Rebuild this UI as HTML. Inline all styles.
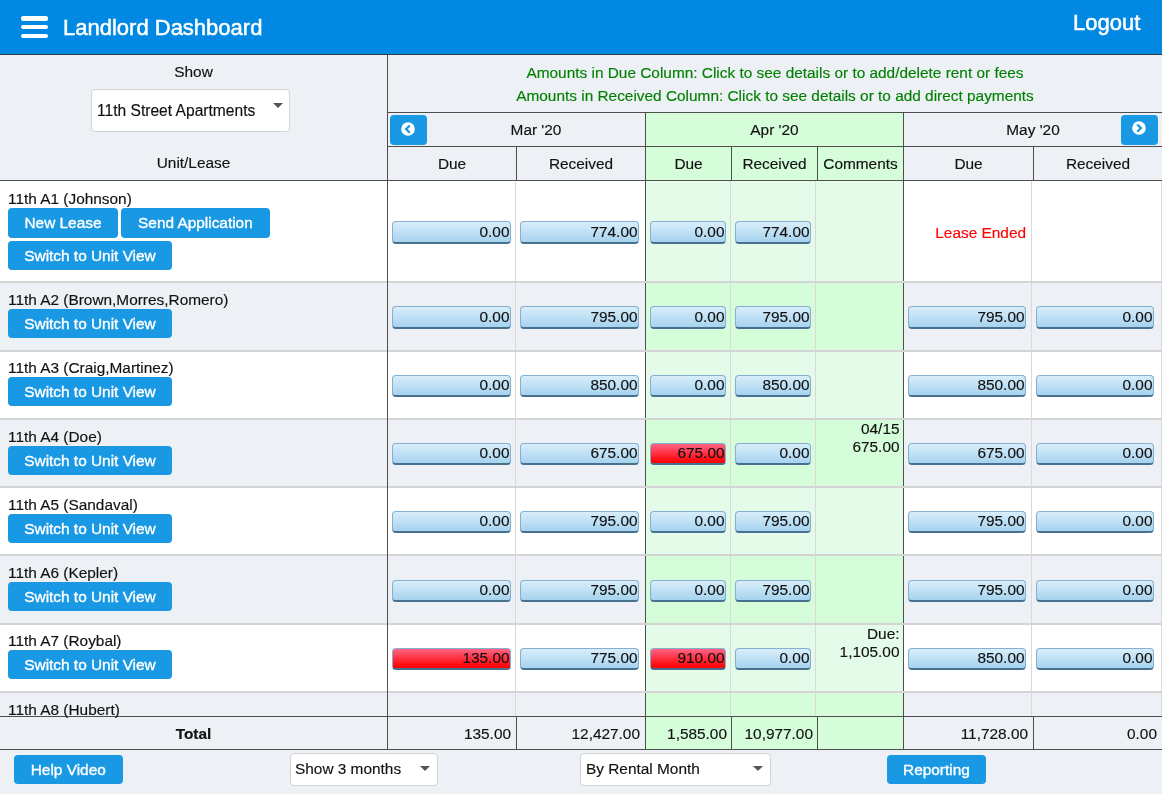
<!DOCTYPE html>
<html><head><meta charset="utf-8"><title>Landlord Dashboard</title>
<style>
html,body{margin:0;padding:0;}
body{width:1162px;height:794px;overflow:hidden;position:relative;background:#edf0f5;font-family:"Liberation Sans",sans-serif;}
body>div{position:absolute;box-sizing:border-box;}
.t,.ab,.ub{will-change:transform;-webkit-text-stroke:0.15px currentColor;}
.ub{-webkit-text-stroke:0.35px #fff;}
.t{white-space:nowrap;line-height:20px;}
.ab{height:22.5px;border-radius:4px;border:1px solid #86afcf;border-bottom:2px solid #47718f;background:linear-gradient(#d8eefb,#a6d3ee);text-align:right;font-size:15.4px;line-height:20px;color:#111;padding-right:0.5px;white-space:nowrap;}
.ab.red{background:linear-gradient(#ff6585,#ff0a10 85%,#ff0000);}
.ub{height:29.5px;border-radius:4px;background:#1998e3;color:#fff;text-align:center;font-size:15.4px;line-height:29.5px;white-space:nowrap;}
</style></head><body>
<div style="left:0px;top:0px;width:1162px;height:54px;background:#0088e2;"></div>
<div style="left:0px;top:54px;width:1162px;height:1px;background:#2f3a44;"></div>
<div style="left:646px;top:113px;width:257px;height:67px;background:#d5fdda;"></div>
<div style="left:0px;top:181px;width:1162px;height:100px;background:#ffffff;"></div>
<div style="left:646px;top:181px;width:257px;height:100px;background:#e5fbe9;"></div>
<div style="left:0px;top:283px;width:1162px;height:67px;background:#edf0f5;"></div>
<div style="left:646px;top:283px;width:257px;height:67px;background:#d5fdda;"></div>
<div style="left:0px;top:352px;width:1162px;height:66px;background:#ffffff;"></div>
<div style="left:646px;top:352px;width:257px;height:66px;background:#e5fbe9;"></div>
<div style="left:0px;top:420px;width:1162px;height:66px;background:#edf0f5;"></div>
<div style="left:646px;top:420px;width:257px;height:66px;background:#d5fdda;"></div>
<div style="left:0px;top:488px;width:1162px;height:66px;background:#ffffff;"></div>
<div style="left:646px;top:488px;width:257px;height:66px;background:#e5fbe9;"></div>
<div style="left:0px;top:556px;width:1162px;height:67px;background:#edf0f5;"></div>
<div style="left:646px;top:556px;width:257px;height:67px;background:#d5fdda;"></div>
<div style="left:0px;top:625px;width:1162px;height:66px;background:#ffffff;"></div>
<div style="left:646px;top:625px;width:257px;height:66px;background:#e5fbe9;"></div>
<div style="left:0px;top:693px;width:1162px;height:23px;background:#edf0f5;"></div>
<div style="left:646px;top:693px;width:257px;height:23px;background:#d5fdda;"></div>
<div style="left:0px;top:281px;width:1162px;height:2px;background:#d4d4d4;"></div>
<div style="left:0px;top:350px;width:1162px;height:2px;background:#d4d4d4;"></div>
<div style="left:0px;top:418px;width:1162px;height:2px;background:#d4d4d4;"></div>
<div style="left:0px;top:486px;width:1162px;height:2px;background:#d4d4d4;"></div>
<div style="left:0px;top:554px;width:1162px;height:2px;background:#d4d4d4;"></div>
<div style="left:0px;top:623px;width:1162px;height:2px;background:#d4d4d4;"></div>
<div style="left:0px;top:691px;width:1162px;height:2px;background:#d4d4d4;"></div>
<div style="left:646px;top:717px;width:257px;height:32px;background:#d5fdda;"></div>
<div style="left:387px;top:55px;width:1px;height:694px;background:#4e4e4e;"></div>
<div style="left:388px;top:112px;width:774px;height:1px;background:#4e4e4e;"></div>
<div style="left:388px;top:146px;width:774px;height:1px;background:#4e4e4e;"></div>
<div style="left:0px;top:180px;width:1162px;height:1px;background:#4e4e4e;"></div>
<div style="left:0px;top:716px;width:1162px;height:1px;background:#4e4e4e;"></div>
<div style="left:0px;top:749px;width:1162px;height:1px;background:#4e4e4e;"></div>
<div style="left:516px;top:147px;width:1px;height:33px;background:#4e4e4e;"></div>
<div style="left:731px;top:147px;width:1px;height:33px;background:#4e4e4e;"></div>
<div style="left:817px;top:147px;width:1px;height:33px;background:#4e4e4e;"></div>
<div style="left:1033px;top:147px;width:1px;height:33px;background:#4e4e4e;"></div>
<div style="left:645px;top:113px;width:1px;height:67px;background:#4e4e4e;"></div>
<div style="left:903px;top:113px;width:1px;height:67px;background:#4e4e4e;"></div>
<div style="left:645px;top:181px;width:1px;height:100px;background:#4e4e4e;"></div>
<div style="left:645px;top:283px;width:1px;height:67px;background:#4e4e4e;"></div>
<div style="left:645px;top:352px;width:1px;height:66px;background:#4e4e4e;"></div>
<div style="left:645px;top:420px;width:1px;height:66px;background:#4e4e4e;"></div>
<div style="left:645px;top:488px;width:1px;height:66px;background:#4e4e4e;"></div>
<div style="left:645px;top:556px;width:1px;height:67px;background:#4e4e4e;"></div>
<div style="left:645px;top:625px;width:1px;height:66px;background:#4e4e4e;"></div>
<div style="left:645px;top:693px;width:1px;height:23px;background:#4e4e4e;"></div>
<div style="left:903px;top:181px;width:1px;height:100px;background:#4e4e4e;"></div>
<div style="left:903px;top:283px;width:1px;height:67px;background:#4e4e4e;"></div>
<div style="left:903px;top:352px;width:1px;height:66px;background:#4e4e4e;"></div>
<div style="left:903px;top:420px;width:1px;height:66px;background:#4e4e4e;"></div>
<div style="left:903px;top:488px;width:1px;height:66px;background:#4e4e4e;"></div>
<div style="left:903px;top:556px;width:1px;height:67px;background:#4e4e4e;"></div>
<div style="left:903px;top:625px;width:1px;height:66px;background:#4e4e4e;"></div>
<div style="left:903px;top:693px;width:1px;height:23px;background:#4e4e4e;"></div>
<div style="left:515px;top:181px;width:1px;height:100px;background:#d9d9d9;"></div>
<div style="left:515px;top:283px;width:1px;height:67px;background:#d9d9d9;"></div>
<div style="left:515px;top:352px;width:1px;height:66px;background:#d9d9d9;"></div>
<div style="left:515px;top:420px;width:1px;height:66px;background:#d9d9d9;"></div>
<div style="left:515px;top:488px;width:1px;height:66px;background:#d9d9d9;"></div>
<div style="left:515px;top:556px;width:1px;height:67px;background:#d9d9d9;"></div>
<div style="left:515px;top:625px;width:1px;height:66px;background:#d9d9d9;"></div>
<div style="left:515px;top:693px;width:1px;height:23px;background:#d9d9d9;"></div>
<div style="left:730px;top:181px;width:1px;height:100px;background:#d9d9d9;"></div>
<div style="left:730px;top:283px;width:1px;height:67px;background:#d9d9d9;"></div>
<div style="left:730px;top:352px;width:1px;height:66px;background:#d9d9d9;"></div>
<div style="left:730px;top:420px;width:1px;height:66px;background:#d9d9d9;"></div>
<div style="left:730px;top:488px;width:1px;height:66px;background:#d9d9d9;"></div>
<div style="left:730px;top:556px;width:1px;height:67px;background:#d9d9d9;"></div>
<div style="left:730px;top:625px;width:1px;height:66px;background:#d9d9d9;"></div>
<div style="left:730px;top:693px;width:1px;height:23px;background:#d9d9d9;"></div>
<div style="left:815px;top:181px;width:1px;height:100px;background:#d9d9d9;"></div>
<div style="left:815px;top:283px;width:1px;height:67px;background:#d9d9d9;"></div>
<div style="left:815px;top:352px;width:1px;height:66px;background:#d9d9d9;"></div>
<div style="left:815px;top:420px;width:1px;height:66px;background:#d9d9d9;"></div>
<div style="left:815px;top:488px;width:1px;height:66px;background:#d9d9d9;"></div>
<div style="left:815px;top:556px;width:1px;height:67px;background:#d9d9d9;"></div>
<div style="left:815px;top:625px;width:1px;height:66px;background:#d9d9d9;"></div>
<div style="left:815px;top:693px;width:1px;height:23px;background:#d9d9d9;"></div>
<div style="left:1031px;top:181px;width:1px;height:100px;background:#d9d9d9;"></div>
<div style="left:1031px;top:283px;width:1px;height:67px;background:#d9d9d9;"></div>
<div style="left:1031px;top:352px;width:1px;height:66px;background:#d9d9d9;"></div>
<div style="left:1031px;top:420px;width:1px;height:66px;background:#d9d9d9;"></div>
<div style="left:1031px;top:488px;width:1px;height:66px;background:#d9d9d9;"></div>
<div style="left:1031px;top:556px;width:1px;height:67px;background:#d9d9d9;"></div>
<div style="left:1031px;top:625px;width:1px;height:66px;background:#d9d9d9;"></div>
<div style="left:1031px;top:693px;width:1px;height:23px;background:#d9d9d9;"></div>
<div style="left:1161px;top:181px;width:1px;height:100px;background:#d9d9d9;"></div>
<div style="left:1161px;top:283px;width:1px;height:67px;background:#d9d9d9;"></div>
<div style="left:1161px;top:352px;width:1px;height:66px;background:#d9d9d9;"></div>
<div style="left:1161px;top:420px;width:1px;height:66px;background:#d9d9d9;"></div>
<div style="left:1161px;top:488px;width:1px;height:66px;background:#d9d9d9;"></div>
<div style="left:1161px;top:556px;width:1px;height:67px;background:#d9d9d9;"></div>
<div style="left:1161px;top:625px;width:1px;height:66px;background:#d9d9d9;"></div>
<div style="left:1161px;top:693px;width:1px;height:23px;background:#d9d9d9;"></div>
<div style="left:516px;top:717px;width:1px;height:32px;background:#4e4e4e;"></div>
<div style="left:645px;top:717px;width:1px;height:32px;background:#4e4e4e;"></div>
<div style="left:731px;top:717px;width:1px;height:32px;background:#4e4e4e;"></div>
<div style="left:817px;top:717px;width:1px;height:32px;background:#4e4e4e;"></div>
<div style="left:903px;top:717px;width:1px;height:32px;background:#4e4e4e;"></div>
<div style="left:1033px;top:717px;width:1px;height:32px;background:#4e4e4e;"></div>
<div style="left:21px;top:16px;width:27px;height:4.6px;background:#fff;border-radius:2px"></div>
<div style="left:21px;top:24.9px;width:27px;height:4.6px;background:#fff;border-radius:2px"></div>
<div style="left:21px;top:33.5px;width:27px;height:4.6px;background:#fff;border-radius:2px"></div>
<div class="t" style="top:17.68px;font-size:22px;color:#fff;font-weight:normal;left:63.2px;-webkit-text-stroke:0.5px #fff;">Landlord Dashboard</div>
<div class="t" style="top:13.18px;font-size:22px;color:#fff;font-weight:normal;left:1072.6px;-webkit-text-stroke:0.5px #fff;">Logout</div>
<div class="t" style="top:61.86px;font-size:15.4px;color:#111;font-weight:normal;left:0px;width:387px;text-align:center;">Show</div>
<div style="left:91px;top:88.5px;width:199px;height:43.5px;background:#fff;border:1px solid #cfd3d8;border-radius:4px"></div>
<div class="t" style="top:100.59px;font-size:15.6px;color:#111;font-weight:normal;left:97px;">11th Street Apartments</div>
<div style="left:272.5px;top:102.5px;width:0;height:0;border-left:5px solid transparent;border-right:5px solid transparent;border-top:5px solid #555"></div>
<div class="t" style="top:153.26px;font-size:15.4px;color:#111;font-weight:normal;left:0px;width:387px;text-align:center;">Unit/Lease</div>
<div class="t" style="top:63.26px;font-size:15.4px;color:#008000;font-weight:normal;left:388px;width:774px;text-align:center;">Amounts in Due Column: Click to see details or to add/delete rent or fees</div>
<div class="t" style="top:85.56px;font-size:15.4px;color:#008000;font-weight:normal;left:388px;width:774px;text-align:center;">Amounts in Received Column: Click to see details or to add direct payments</div>
<div style="left:390px;top:115px;width:37px;height:30px;background:#1998e3;border-radius:4px"><svg width="18" height="18" style="position:absolute;left:9.05px;top:4.7px" viewBox="0 0 18 18"><circle cx="9" cy="9" r="6.8" fill="#fff"/><path d="M10.75 5.5 L7.05 9.1 L10.75 12.7" stroke="#1998e3" stroke-width="2.2" fill="none" stroke-linecap="butt" stroke-linejoin="miter"/></svg></div>
<div style="left:1121px;top:115px;width:37px;height:30px;background:#1998e3;border-radius:4px"><svg width="18" height="18" style="position:absolute;left:9.25px;top:4.3px" viewBox="0 0 18 18"><circle cx="9" cy="9" r="6.8" fill="#fff"/><path d="M7.25 5.5 L10.95 9.1 L7.25 12.7" stroke="#1998e3" stroke-width="2.2" fill="none" stroke-linecap="butt" stroke-linejoin="miter"/></svg></div>
<div class="t" style="top:119.56px;font-size:15.4px;color:#111;font-weight:normal;left:427px;width:218px;text-align:center;">Mar &#39;20</div>
<div class="t" style="top:119.56px;font-size:15.4px;color:#111;font-weight:normal;left:646px;width:257px;text-align:center;">Apr &#39;20</div>
<div class="t" style="top:119.56px;font-size:15.4px;color:#111;font-weight:normal;left:904px;width:258px;text-align:center;">May &#39;20</div>
<div class="t" style="top:153.66px;font-size:15.4px;color:#111;font-weight:normal;left:388px;width:128px;text-align:center;">Due</div>
<div class="t" style="top:153.66px;font-size:15.4px;color:#111;font-weight:normal;left:517px;width:128px;text-align:center;">Received</div>
<div class="t" style="top:153.66px;font-size:15.4px;color:#111;font-weight:normal;left:646px;width:85px;text-align:center;">Due</div>
<div class="t" style="top:153.66px;font-size:15.4px;color:#111;font-weight:normal;left:732px;width:85px;text-align:center;">Received</div>
<div class="t" style="top:153.66px;font-size:15.4px;color:#111;font-weight:normal;left:818px;width:85px;text-align:center;">Comments</div>
<div class="t" style="top:153.66px;font-size:15.4px;color:#111;font-weight:normal;left:904px;width:129px;text-align:center;">Due</div>
<div class="t" style="top:153.66px;font-size:15.4px;color:#111;font-weight:normal;left:1034px;width:128px;text-align:center;">Received</div>
<div class="t" style="top:189.46px;font-size:15.4px;color:#111;font-weight:normal;left:8.0px;">11th A1 (Johnson)</div>
<div class="ub" style="left:8px;top:208px;width:110.00px;height:29.5px;line-height:29.5px">New Lease</div>
<div class="ub" style="left:121px;top:208px;width:148.80px;height:29.5px;line-height:29.5px">Send Application</div>
<div class="ub" style="left:8px;top:241.3px;width:164.00px;height:29.2px;line-height:29.5px">Switch to Unit View</div>
<div class="ab" style="left:392px;top:221px;width:119px;height:22.5px;line-height:20px">0.00</div>
<div class="ab" style="left:520px;top:221px;width:119px;height:22.5px;line-height:20px">774.00</div>
<div class="ab" style="left:650px;top:221px;width:76px;height:22.5px;line-height:20px">0.00</div>
<div class="ab" style="left:735px;top:221px;width:76px;height:22.5px;line-height:20px">774.00</div>
<div class="t" style="top:223.16px;font-size:15.4px;color:#ff0000;font-weight:normal;left:626.3px;width:400px;text-align:right;">Lease Ended</div>
<div class="t" style="top:289.96px;font-size:15.4px;color:#111;font-weight:normal;left:8.0px;">11th A2 (Brown,Morres,Romero)</div>
<div class="ub" style="left:8px;top:308.9px;width:164.00px;height:29.2px;line-height:29.5px">Switch to Unit View</div>
<div class="ab" style="left:392px;top:306px;width:119px;height:22.5px;line-height:20px">0.00</div>
<div class="ab" style="left:520px;top:306px;width:119px;height:22.5px;line-height:20px">795.00</div>
<div class="ab" style="left:650px;top:306px;width:76px;height:22.5px;line-height:20px">0.00</div>
<div class="ab" style="left:735px;top:306px;width:76px;height:22.5px;line-height:20px">795.00</div>
<div class="ab" style="left:908px;top:306px;width:118px;height:22.5px;line-height:20px">795.00</div>
<div class="ab" style="left:1036px;top:306px;width:118px;height:22.5px;line-height:20px">0.00</div>
<div class="t" style="top:357.96px;font-size:15.4px;color:#111;font-weight:normal;left:8.0px;">11th A3 (Craig,Martinez)</div>
<div class="ub" style="left:8px;top:376.9px;width:164.00px;height:29.2px;line-height:29.5px">Switch to Unit View</div>
<div class="ab" style="left:392px;top:375px;width:119px;height:21.5px;line-height:18px">0.00</div>
<div class="ab" style="left:520px;top:375px;width:119px;height:21.5px;line-height:18px">850.00</div>
<div class="ab" style="left:650px;top:375px;width:76px;height:21.5px;line-height:18px">0.00</div>
<div class="ab" style="left:735px;top:375px;width:76px;height:21.5px;line-height:18px">850.00</div>
<div class="ab" style="left:908px;top:375px;width:118px;height:21.5px;line-height:18px">850.00</div>
<div class="ab" style="left:1036px;top:375px;width:118px;height:21.5px;line-height:18px">0.00</div>
<div class="t" style="top:426.96px;font-size:15.4px;color:#111;font-weight:normal;left:8.0px;">11th A4 (Doe)</div>
<div class="ub" style="left:8px;top:445.9px;width:164.00px;height:29.2px;line-height:29.5px">Switch to Unit View</div>
<div class="ab" style="left:392px;top:443px;width:119px;height:21.5px;line-height:18px">0.00</div>
<div class="ab" style="left:520px;top:443px;width:119px;height:21.5px;line-height:18px">675.00</div>
<div class="ab red" style="left:650px;top:443px;width:76px;height:21.5px;line-height:18px">675.00</div>
<div class="ab" style="left:735px;top:443px;width:76px;height:21.5px;line-height:18px">0.00</div>
<div class="ab" style="left:908px;top:443px;width:118px;height:21.5px;line-height:18px">675.00</div>
<div class="ab" style="left:1036px;top:443px;width:118px;height:21.5px;line-height:18px">0.00</div>
<div class="t" style="left:818px;width:81.5px;text-align:right;top:419.5px;line-height:17.8px;font-size:15.4px;color:#111">04/15<br>675.00</div>
<div class="t" style="top:494.96px;font-size:15.4px;color:#111;font-weight:normal;left:8.0px;">11th A5 (Sandaval)</div>
<div class="ub" style="left:8px;top:513.9px;width:164.00px;height:29.2px;line-height:29.5px">Switch to Unit View</div>
<div class="ab" style="left:392px;top:511px;width:119px;height:21.5px;line-height:18px">0.00</div>
<div class="ab" style="left:520px;top:511px;width:119px;height:21.5px;line-height:18px">795.00</div>
<div class="ab" style="left:650px;top:511px;width:76px;height:21.5px;line-height:18px">0.00</div>
<div class="ab" style="left:735px;top:511px;width:76px;height:21.5px;line-height:18px">795.00</div>
<div class="ab" style="left:908px;top:511px;width:118px;height:21.5px;line-height:18px">795.00</div>
<div class="ab" style="left:1036px;top:511px;width:118px;height:21.5px;line-height:18px">0.00</div>
<div class="t" style="top:562.96px;font-size:15.4px;color:#111;font-weight:normal;left:8.0px;">11th A6 (Kepler)</div>
<div class="ub" style="left:8px;top:581.9px;width:164.00px;height:29.2px;line-height:29.5px">Switch to Unit View</div>
<div class="ab" style="left:392px;top:580px;width:119px;height:21.5px;line-height:18px">0.00</div>
<div class="ab" style="left:520px;top:580px;width:119px;height:21.5px;line-height:18px">795.00</div>
<div class="ab" style="left:650px;top:580px;width:76px;height:21.5px;line-height:18px">0.00</div>
<div class="ab" style="left:735px;top:580px;width:76px;height:21.5px;line-height:18px">795.00</div>
<div class="ab" style="left:908px;top:580px;width:118px;height:21.5px;line-height:18px">795.00</div>
<div class="ab" style="left:1036px;top:580px;width:118px;height:21.5px;line-height:18px">0.00</div>
<div class="t" style="top:630.96px;font-size:15.4px;color:#111;font-weight:normal;left:8.0px;">11th A7 (Roybal)</div>
<div class="ub" style="left:8px;top:649.9px;width:164.00px;height:29.2px;line-height:29.5px">Switch to Unit View</div>
<div class="ab red" style="left:392px;top:648px;width:119px;height:21.5px;line-height:18px">135.00</div>
<div class="ab" style="left:520px;top:648px;width:119px;height:21.5px;line-height:18px">775.00</div>
<div class="ab red" style="left:650px;top:648px;width:76px;height:21.5px;line-height:18px">910.00</div>
<div class="ab" style="left:735px;top:648px;width:76px;height:21.5px;line-height:18px">0.00</div>
<div class="ab" style="left:908px;top:648px;width:118px;height:21.5px;line-height:18px">850.00</div>
<div class="ab" style="left:1036px;top:648px;width:118px;height:21.5px;line-height:18px">0.00</div>
<div class="t" style="left:818px;width:81.5px;text-align:right;top:624.5px;line-height:17.8px;font-size:15.4px;color:#111">Due:<br>1,105.00</div>
<div class="t" style="top:699.76px;font-size:15.4px;color:#111;font-weight:normal;left:8.0px;">11th A8 (Hubert)</div>
<div class="t" style="top:723.96px;font-size:15.4px;color:#111;font-weight:bold;left:0px;width:387px;text-align:center;">Total</div>
<div class="t" style="top:723.96px;font-size:15.4px;color:#111;font-weight:normal;left:111px;width:400px;text-align:right;">135.00</div>
<div class="t" style="top:723.96px;font-size:15.4px;color:#111;font-weight:normal;left:240px;width:400px;text-align:right;">12,427.00</div>
<div class="t" style="top:723.96px;font-size:15.4px;color:#111;font-weight:normal;left:326.5px;width:400px;text-align:right;">1,585.00</div>
<div class="t" style="top:723.96px;font-size:15.4px;color:#111;font-weight:normal;left:412.5px;width:400px;text-align:right;">10,977.00</div>
<div class="t" style="top:723.96px;font-size:15.4px;color:#111;font-weight:normal;left:628px;width:400px;text-align:right;">11,728.00</div>
<div class="t" style="top:723.96px;font-size:15.4px;color:#111;font-weight:normal;left:757px;width:400px;text-align:right;">0.00</div>
<div class="ub" style="left:14px;top:755px;width:108.50px;height:28.6px;line-height:29.5px">Help Video</div>
<div class="ub" style="left:887.2px;top:755.3px;width:98.80px;height:28.5px;line-height:29.5px">Reporting</div>
<div style="left:290px;top:753.4px;width:147.5px;height:32.5px;background:#fff;border:1px solid #cfd3d8;border-radius:4px"></div>
<div class="t" style="top:758.66px;font-size:15.4px;color:#111;font-weight:normal;left:294.5px;">Show 3 months</div>
<div style="left:420px;top:765.5px;width:0;height:0;border-left:5px solid transparent;border-right:5px solid transparent;border-top:5.5px solid #555"></div>
<div style="left:580px;top:753.4px;width:190.5px;height:32.5px;background:#fff;border:1px solid #cfd3d8;border-radius:4px"></div>
<div class="t" style="top:758.66px;font-size:15.4px;color:#111;font-weight:normal;left:585.5px;">By Rental Month</div>
<div style="left:753px;top:765.5px;width:0;height:0;border-left:5px solid transparent;border-right:5px solid transparent;border-top:5.5px solid #555"></div>
</body></html>
